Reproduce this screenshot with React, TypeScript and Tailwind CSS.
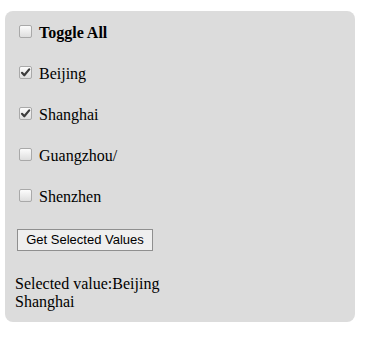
import { useState } from 'react';

const cities = ['Beijing', 'Shanghai', 'Guangzhou/', 'Shenzhen'];

function Box({ checked, onChange }: { checked: boolean; onChange: () => void }) {
    return (
        <span className="relative ml-[4px] mr-[3px] inline-flex h-[13px] w-[13px] shrink-0">
            <input
                type="checkbox"
                checked={checked}
                onChange={onChange}
                className="m-0 h-[13px] w-[13px] cursor-default appearance-none rounded-[2px] border border-[#a9a9a9] bg-gradient-to-b from-[#fcfcfc] to-[#dedede]"
            />
            {checked && (
                <svg
                    viewBox="0 0 13 13"
                    className="pointer-events-none absolute left-0 top-0 h-[13px] w-[13px]"
                >
                    <path
                        d="M3 6.8 L5.3 9.3 L10.2 3.4"
                        fill="none"
                        stroke="#3c3c3c"
                        strokeWidth="2.2"
                        strokeLinecap="round"
                        strokeLinejoin="round"
                    />
                </svg>
            )}
        </span>
    );
}

export default function App() {
    const [selected, setSelected] = useState<string[]>(['Beijing', 'Shanghai']);
    const [shown, setShown] = useState<string[]>(['Beijing', 'Shanghai']);

    const allOn = selected.length === cities.length;

    const toggle = (c: string) =>
        setSelected((s) => (s.includes(c) ? s.filter((x) => x !== c) : [...s, c]));

    return (
        <div className="min-h-[338px] bg-white pl-[5px] pt-[11px] font-['Liberation_Serif','Times_New_Roman',serif] text-[16px] leading-[18px] text-black">
            <div className="flex w-[350px] flex-col rounded-[8px] bg-[#dcdcdc] px-[10px] pb-[11px] pt-[11px]">
                {/* Checkbox list */}
                <div className="flex flex-col gap-[23px]">
                    <label className="flex h-[18px] items-center">
                        <Box checked={allOn} onChange={() => setSelected(allOn ? [] : [...cities])} />
                        <span className="ml-[4px] mt-[3px] font-bold">Toggle All</span>
                    </label>
                    {cities.map((c) => (
                        <label key={c} className="flex h-[18px] items-center">
                            <Box checked={selected.includes(c)} onChange={() => toggle(c)} />
                            <span className="ml-[4px] mt-[3px]">{c}</span>
                        </label>
                    ))}
                </div>

                <div className="mt-[25px] pl-[2px]">
                    <button
                        type="button"
                        onClick={() => setShown(cities.filter((c) => selected.includes(c)))}
                        className="h-[22px] w-[136px] border border-[#8f8f8f] bg-[#efefef] font-['Liberation_Sans',Arial,sans-serif] text-[13px] leading-[20px] text-black"
                    >
                        Get Selected Values
                    </button>
                </div>

                <div className="mt-[24px]">
                    <div>Selected value:{shown[0] ?? ''}</div>
                    {shown.slice(1).map((c) => (
                        <div key={c}>{c}</div>
                    ))}
                </div>
            </div>
        </div>
    );
}
